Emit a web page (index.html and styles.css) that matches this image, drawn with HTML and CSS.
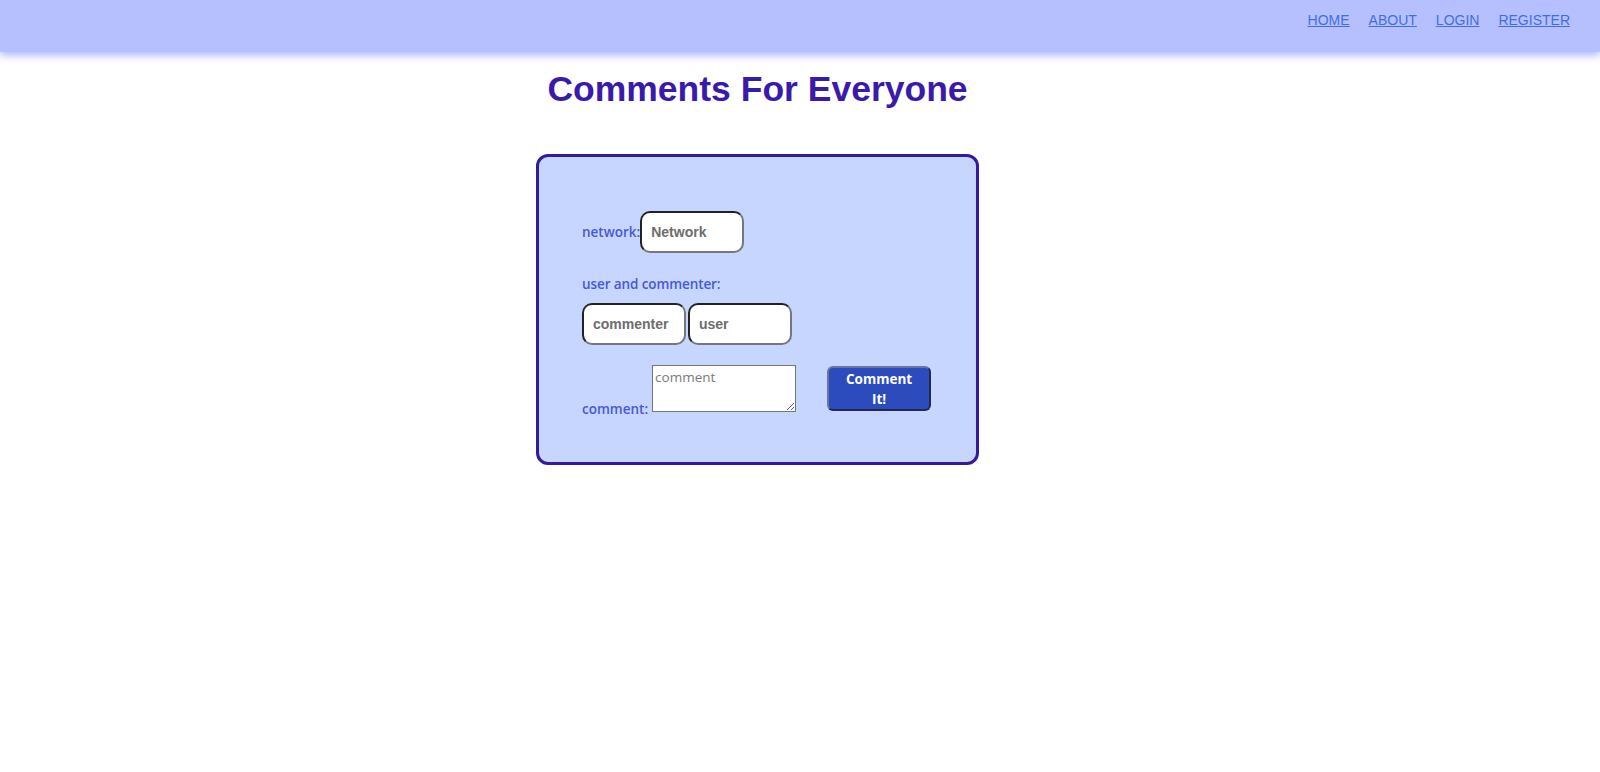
FILE: index.html
```html
<!DOCTYPE html>
<html lang="en">
<head>
<meta charset="utf-8">
<title>Comments For Everyone</title>
<link rel="stylesheet" href="styles.css">
</head>
<body>
<header class="topbar">
  <nav class="nav">
    <a href="#" class="nav-link">HOME</a>
    <a href="#" class="nav-link">ABOUT</a>
    <a href="#" class="nav-link">LOGIN</a>
    <a href="#" class="nav-link">REGISTER</a>
  </nav>
</header>
<main class="main">
  <h1 class="title">Comments For Everyone</h1>
  <form class="card">
    <div class="row row-network">
      <label class="label" for="network">network:</label>
      <input class="field" id="network" type="text" placeholder="Network">
    </div>
    <div class="label label-block">user and commenter:</div>
    <div class="row row-users">
      <input class="field" type="text" placeholder="commenter">
      <input class="field" type="text" placeholder="user">
    </div>
    <div class="row row-comment">
      <label class="label label-comment" for="comment">comment:</label>
      <textarea class="comment" id="comment" placeholder="comment"></textarea>
      <button class="submit" type="button">Comment It!</button>
    </div>
  </form>
</main>
</body>
</html>
```
FILE: styles.css
```css
* { box-sizing: border-box; }

html, body {
  margin: 0;
  padding: 0;
  background: #ffffff;
}

body {
  font-family: "Liberation Sans", Arial, sans-serif;
}

.topbar {
  height: 52px;
  background: #b7c0fe;
  box-shadow: 0 4px 7px rgba(170, 180, 252, 0.85);
  display: flex;
  justify-content: flex-end;
  align-items: flex-start;
  padding: 12px 30px 0 0;
}

.nav {
  display: flex;
  gap: 19px;
}

.nav-link {
  font-family: "Liberation Sans", Arial, sans-serif;
  font-size: 14px;
  color: #3f6fe6;
  text-decoration: underline;
  line-height: 17px;
}

.main {
  padding-right: 85px;
  display: flex;
  flex-direction: column;
  align-items: center;
}

.title {
  margin: 17px 0 0;
  font-family: "Liberation Sans", Arial, sans-serif;
  font-weight: 700;
  font-size: 35.5px;
  line-height: 40px;
  color: #3a1aaa;
}

.card {
  margin-top: 45px;
  width: 443px;
  height: 311px;
  background: #c6d6fe;
  border: 3px solid #351a9e;
  border-radius: 12px;
  padding: 54px 40px 0 43px;
  display: flex;
  flex-direction: column;
  align-items: flex-start;
}

.row {
  display: flex;
}

.row-network {
  align-items: center;
}

.label {
  font-family: "Open Sans", "Noto Sans", sans-serif;
  font-weight: 600;
  font-size: 13.5px;
  color: #4659d8;
  line-height: 20px;
}

.label-block {
  margin-top: 21px;
  letter-spacing: -0.1px;
}

.field {
  width: 104px;
  height: 42px;
  border: 2px solid #777777;
  border-top-color: #222222;
  border-left-color: #222222;
  border-radius: 10px;
  background: #ffffff;
  padding: 0 9px;
  font-family: "Liberation Sans", Arial, sans-serif;
  font-weight: 700;
  font-size: 14px;
  color: #666666;
  outline: none;
}

.field::placeholder {
  color: #6d6d6d;
}

.row-users {
  margin-top: 9px;
  gap: 2px;
}

.row-comment {
  margin-top: 20px;
  align-items: flex-end;
}

.label-comment {
  line-height: 14px;
  margin: 0 4px -4px 0;
}

.comment {
  width: 144px;
  height: 47px;
  margin: 0;
  border: 1px solid #767676;
  background: #ffffff;
  padding: 2px 2px;
  font-family: "Open Sans", "Noto Sans", sans-serif;
  font-size: 13.5px;
  color: #333;
  resize: both;
}

.comment::placeholder {
  color: #7a7a7a;
}

.submit {
  align-self: flex-start;
  margin: 1px 0 0 31px;
  width: 104px;
  height: 45px;
  padding: 0 12px;
  background: #2c4cbd;
  border: 2px solid #222a50;
  border-top-color: #6a74a0;
  border-left-color: #6a74a0;
  border-radius: 6px;
  font-family: "Open Sans", "Noto Sans", sans-serif;
  font-weight: 700;
  font-size: 13.5px;
  line-height: 20px;
  color: #ffffff;
  cursor: pointer;
}
```
